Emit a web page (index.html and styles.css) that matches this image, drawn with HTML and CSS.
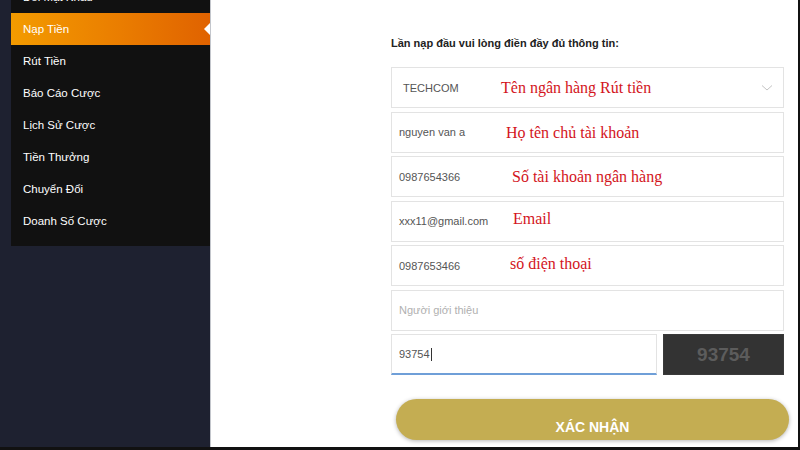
FILE: index.html
```html
<!DOCTYPE html>
<html lang="vi">
<head>
<meta charset="utf-8">
<title>Nạp Tiền</title>
<link rel="stylesheet" href="styles.css">
</head>
<body>
<div class="page">
  <aside class="side">
    <nav class="menu">
      <a class="item">Đổi Mật Khẩu</a>
      <a class="item active">Nạp Tiền</a>
      <a class="item">Rút Tiền</a>
      <a class="item">Báo Cáo Cược</a>
      <a class="item">Lịch Sử Cược</a>
      <a class="item">Tiền Thưởng</a>
      <a class="item">Chuyển Đổi</a>
      <a class="item">Doanh Số Cược</a>
    </nav>
  </aside>
  <main class="main">
    <form class="form">
      <h2 class="title">Lần nạp đầu vui lòng điền đầy đủ thông tin:</h2>
      <div class="field select">
        <span class="val bank">TECHCOM</span>
        <span class="note n1">Tên ngân hàng Rút tiền</span>
        <svg class="chev" width="12" height="8" viewBox="0 0 12 8"><polyline points="1,1.5 6,6 11,1.5" fill="none" stroke="#c4c4c4" stroke-width="1"/></svg>
      </div>
      <div class="field"><span class="val">nguyen van a</span><span class="note n2">Họ tên chủ tài khoản</span></div>
      <div class="field"><span class="val">0987654366</span><span class="note n3">Số tài khoản ngân hàng</span></div>
      <div class="field"><span class="val">xxx11@gmail.com</span><span class="note n4">Email</span></div>
      <div class="field"><span class="val">0987653466</span><span class="note n5">số điện thoại</span></div>
      <div class="field"><span class="val ph">Người giới thiệu</span></div>
      <div class="captcha-row">
        <div class="field code"><span class="val">93754</span><span class="caret"></span></div>
        <div class="captcha">93754</div>
      </div>
      <button type="button" class="submit">XÁC NHẬN</button>
    </form>
  </main>
</div>
</body>
</html>
```
FILE: styles.css
```css
* { box-sizing: border-box; }
html, body { margin: 0; padding: 0; }
body {
  background: #111;
  width: 800px;
  height: 450px;
  overflow: hidden;
  font-family: "Liberation Sans", Arial, sans-serif;
}
.page {
  display: flex;
  width: 798px;
  height: 447px;
}
.side {
  width: 210px;
  flex: none;
  background: #1e2130;
  padding-left: 11px;
}
.menu {
  background: #111;
  margin-top: -19px;
  padding-bottom: 9px;
  display: flex;
  flex-direction: column;
}
.item {
  position: relative;
  display: block;
  height: 32px;
  line-height: 32px;
  padding-left: 12px;
  color: #fff;
  font-size: 11.5px;
  text-decoration: none;
}
.item.active {
  background: linear-gradient(90deg, #f39b00 0%, #ea7d00 55%, #e06200 100%);
}
.item.active::after {
  content: "";
  position: absolute;
  right: 0;
  top: 10px;
  border-top: 6px solid transparent;
  border-bottom: 6px solid transparent;
  border-right: 6px solid #fff;
}
.main {
  flex: 1;
  background: #fff;
  border-left: 1px solid #c3c6cc;
  padding-left: 180px;
}
.form {
  width: 393px;
  padding-top: 36px;
  display: flex;
  flex-direction: column;
  gap: 3.5px;
}
.title {
  margin: 0 0 13.5px;
  font-size: 11px;
  line-height: 14px;
  font-weight: bold;
  color: #222;
}
.field {
  position: relative;
  height: 41px;
  border: 1px solid #e3e3e3;
  display: flex;
  align-items: center;
  padding-left: 7px;
  background: #fff;
}
.val {
  font-size: 11px;
  color: #555;
}
.val.bank { padding-left: 4px; }
.val.ph { color: #b0b0b0; }
.note {
  position: absolute;
  font-family: "Liberation Serif", "Times New Roman", serif;
  font-size: 16px;
  color: #d3141c;
  white-space: nowrap;
  line-height: 18px;
}
.n1 { left: 109px; top: 11px; }
.n2 { left: 114px; top: 11px; }
.n3 { left: 120px; top: 11px; }
.n4 { left: 121px; top: 8px; }
.n5 { left: 118px; top: 9px; }
.chev {
  position: absolute;
  right: 10px;
  top: 16px;
}
.captcha-row {
  display: flex;
  gap: 6px;
}
.field.code {
  width: 266px;
  border-bottom: 2px solid #6f9fd8;
}
.caret {
  display: inline-block;
  width: 1px;
  height: 13px;
  background: #333;
  margin-left: 1px;
}
.captcha {
  flex: 1;
  height: 41px;
  background: #333;
  color: #5c5c5c;
  font-weight: bold;
  font-size: 19px;
  display: flex;
  align-items: center;
  justify-content: center;
  border: 1px solid #3a3a3a;
}
.submit {
  margin: 20.5px 0 0 5px;
  width: 393px;
  height: 41px;
  border: none;
  border-radius: 21px;
  background: #c4ad52;
  box-shadow: 0 1px 4px rgba(0,0,0,0.3);
  color: #fff;
  font-family: "Liberation Sans", Arial, sans-serif;
  font-weight: bold;
  font-size: 14px;
  padding: 15px 0 0;
  line-height: 26px;
  display: block;
  text-align: center;
}
```
